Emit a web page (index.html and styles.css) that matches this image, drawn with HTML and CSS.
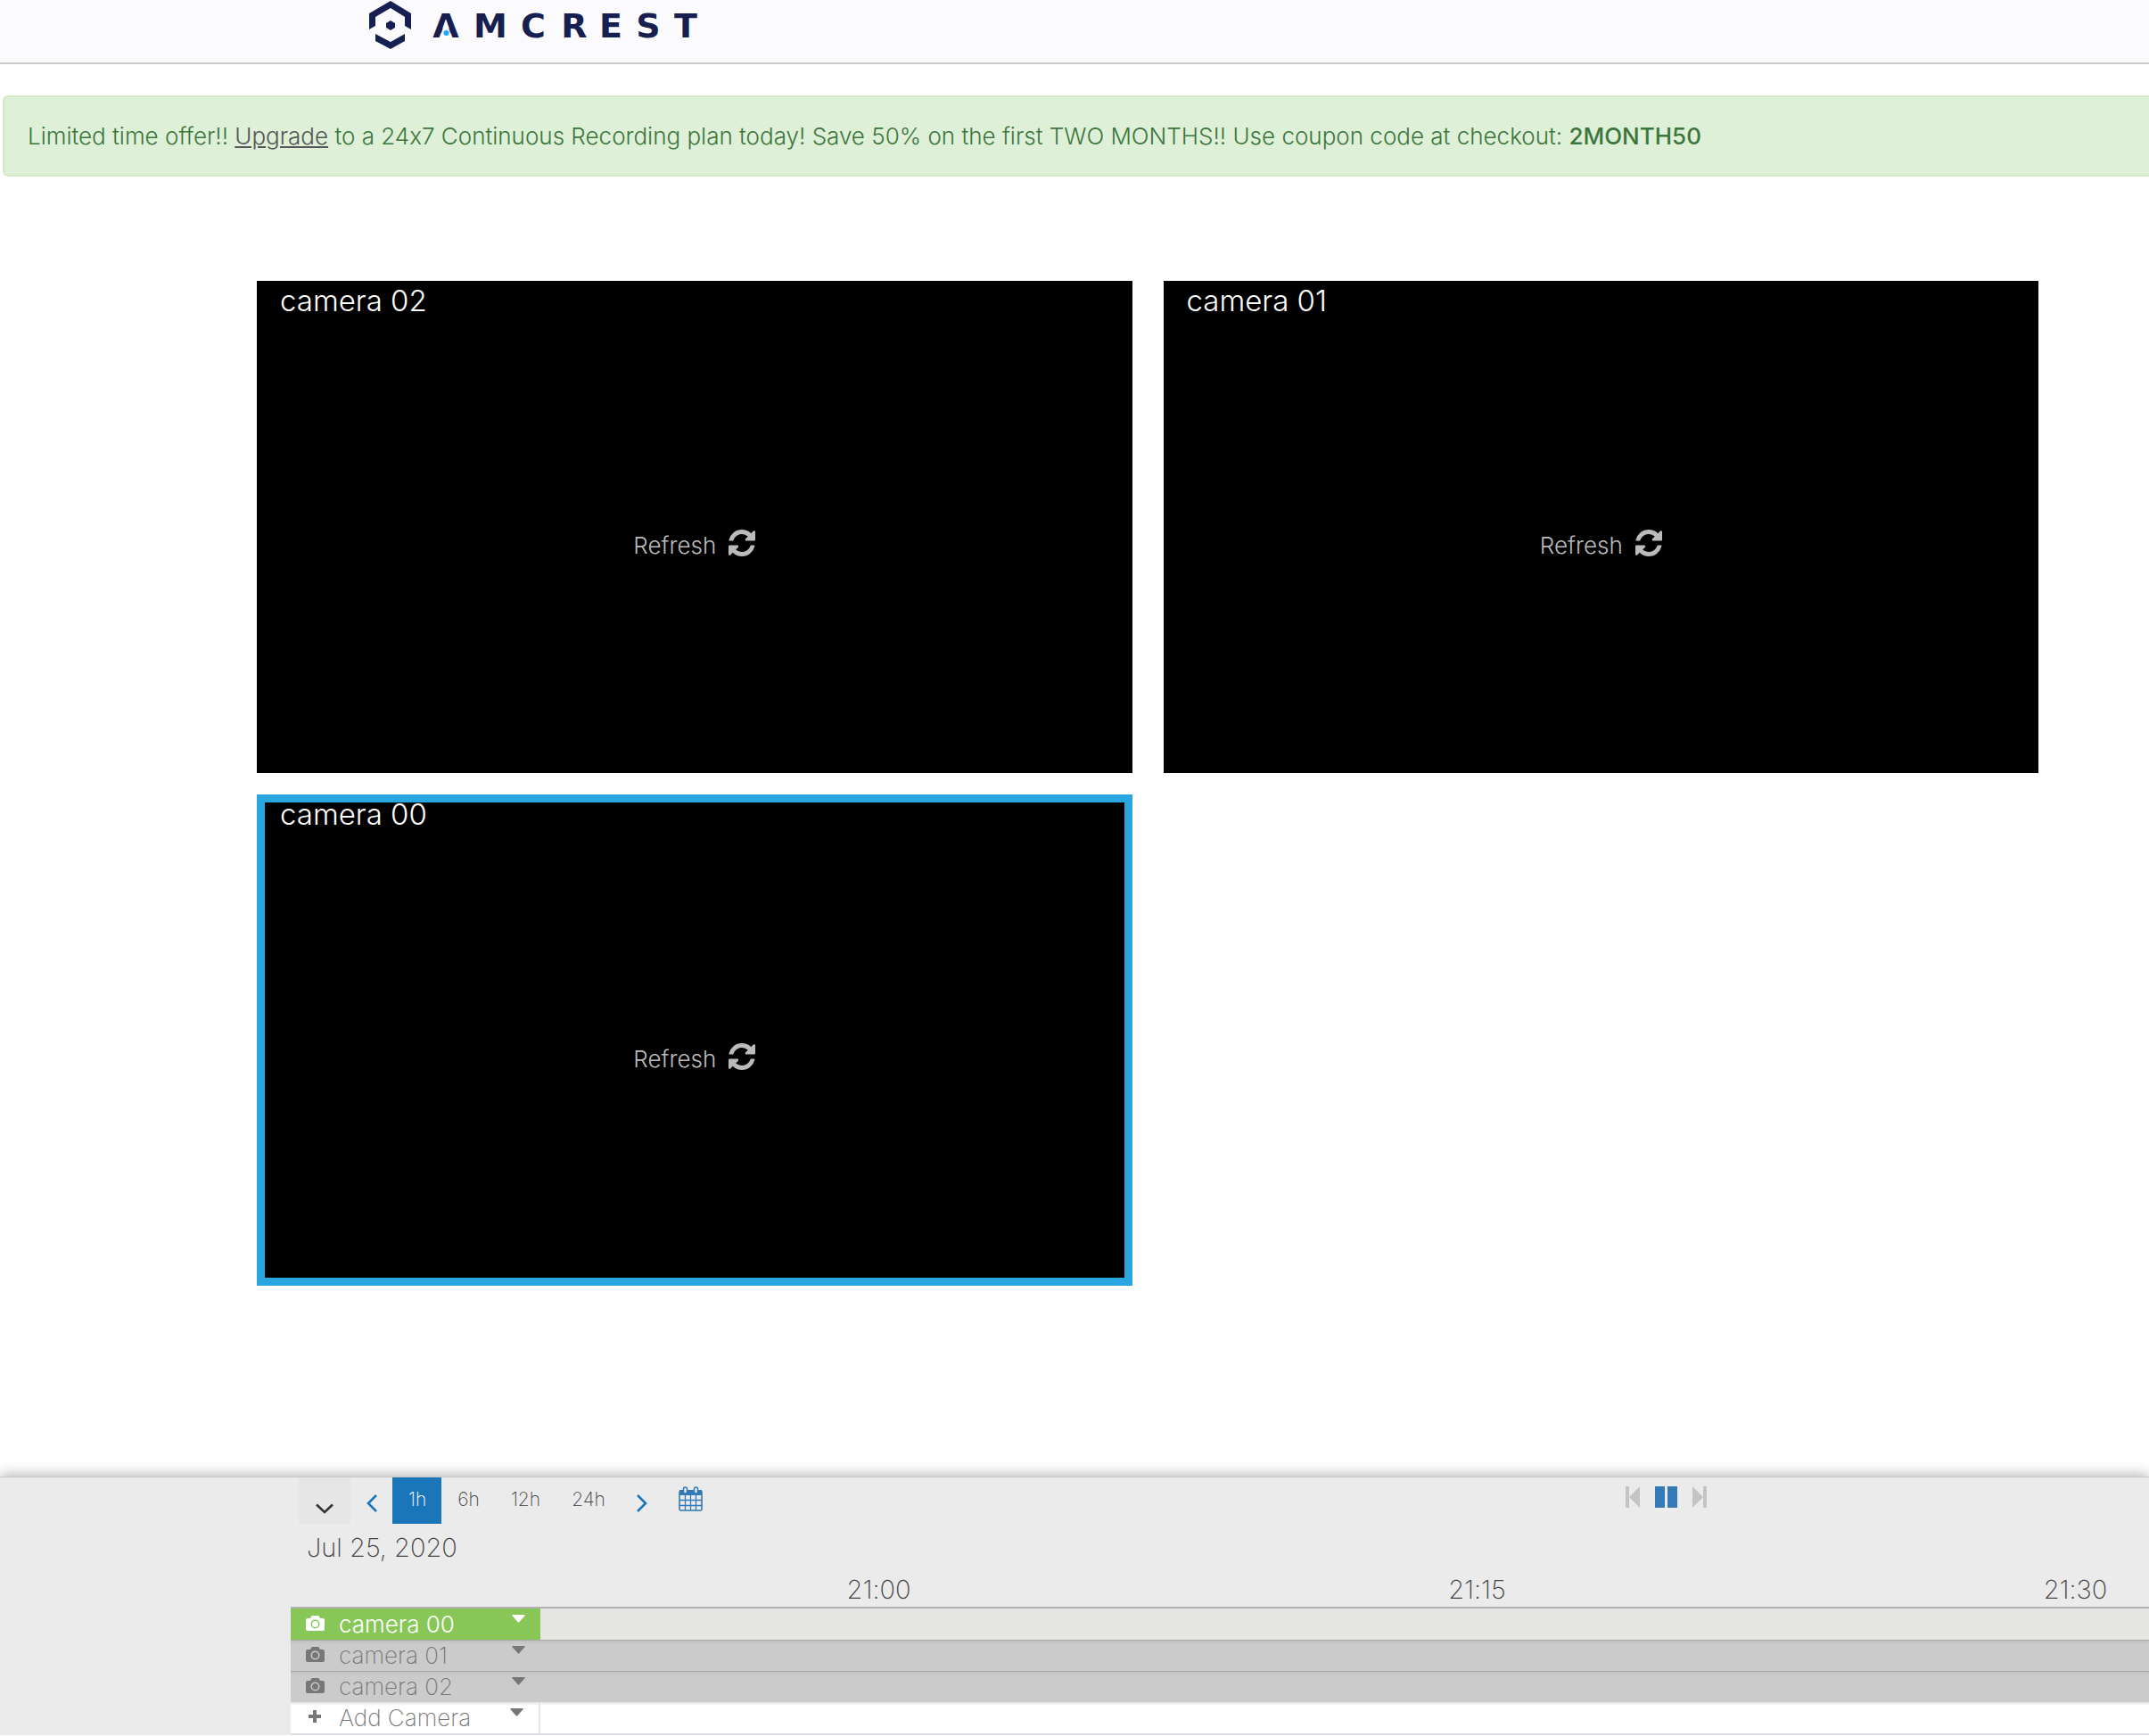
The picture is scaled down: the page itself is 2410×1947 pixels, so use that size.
FILE: index.html
```html
<!DOCTYPE html>
<html lang="en">
<head>
    <meta charset="UTF-8">
    <meta name="viewport" content="width=device-width, initial-scale=1.0">
    <title>Amcrest Cloud</title>
    <link rel="stylesheet" href="styles.css">
</head>
<body>

<!-- shared icons -->
<svg class="sprite" aria-hidden="true">
    <symbol id="refresh" viewBox="0 0 1536 1536">
        <path d="M1511 928q0 5-1 7-64 268-268 434.500T764 1536q-146 0-282.500-55T238 1324l-129 129q-19 19-45 19t-45-19-19-45V960q0-26 19-45t45-19h448q26 0 45 19t19 45-19 45l-137 137q71 66 161 102t187 36q134 0 250-65t186-179q11-17 53-117 8-23 30-23h192q13 0 22.500 9.500t9.500 22.500zm25-800v448q0 26-19 45t-45 19h-448q-26 0-45-19t-19-45 19-45l138-138Q969 256 768 256q-134 0-250 65T332 500q-11 17-53 117-8 23-30 23H50q-13 0-22.500-9.500T18 608v-7q65-268 270-434.500T768 0q146 0 284 55.500T1297 212l130-129q19-19 45-19t45 19 19 45z"/>
    </symbol>
    <symbol id="camera" viewBox="0 0 21 17">
        <path fill-rule="evenodd" d="M2 3h3l1-2q.4-1 1.500-1h6q1.100 0 1.500 1l1 2h3q2 0 2 2v10q0 2-2 2H2q-2 0-2-2V5q0-2 2-2zm8.500 1.500a5 5 0 1 0 0 10 5 5 0 0 0 0-10zm0 1.500a3.500 3.500 0 1 1 0 7 3.500 3.500 0 0 1 0-7z"/>
    </symbol>
    <symbol id="caret" viewBox="0 0 15 9">
        <path d="M1 0h13q1.500 0 .5 1.200L8.200 8.300q-.7.700-1.400 0L.5 1.200Q-.5 0 1 0z"/>
    </symbol>
</svg>

<header class="header">
    <a href="#" class="logo" aria-label="Amcrest">
        <svg width="370" height="58" viewBox="0 0 370 58">
            <g fill="#171f51">
                <path d="M24 1 47 15V33L40 29V19L24 9 7 19V29L0 33V15z"/>
                <path d="M7 38 24 47 40 38V46L24 55 7 46z"/>
                <path d="M24 23 29 26V31L24 34 19 31V26z"/>
            </g>
            <text class="wordmark" y="42" x="86 136 184 230 271 313 355">AMCREST</text>
            <path fill="#fbfbfe" d="M86 22 93 42.500H79z"/>
            <circle cx="86.500" cy="37" r="3" fill="#18a8ff"/>
        </svg>
    </a>
</header>

<div class="alert">
    Limited time offer!! <a href="#">Upgrade</a> to a 24x7 Continuous Recording plan today! Save 50% on the first TWO MONTHS!! Use coupon code at checkout: <b>2MONTH50</b>
</div>

<main class="cameras">
    <section class="camera">
        <h2>camera 02</h2>
        <button class="refresh">Refresh <svg><use href="#refresh"/></svg></button>
    </section>
    <section class="camera">
        <h2>camera 01</h2>
        <button class="refresh">Refresh <svg><use href="#refresh"/></svg></button>
    </section>
    <section class="camera selected">
        <h2>camera 00</h2>
        <button class="refresh">Refresh <svg><use href="#refresh"/></svg></button>
    </section>
</main>

<footer class="timeline">
    <div class="toolbar">
        <button class="toggle" aria-label="Collapse timeline">
            <svg width="20" height="12" viewBox="0 0 20 12"><path d="M1 1.500l9 8.500 9-8.500" fill="none" stroke="#333" stroke-width="2.600"/></svg>
        </button>
        <button class="arrow" aria-label="Earlier">
            <svg width="12" height="20" viewBox="0 0 12 20"><path d="M11 1L2 10l9 9" fill="none" stroke="#1b75b9" stroke-width="2.600"/></svg>
        </button>
        <button class="period active">1h</button>
        <button class="period">6h</button>
        <button class="period">12h</button>
        <button class="period">24h</button>
        <button class="arrow" aria-label="Later">
            <svg width="12" height="20" viewBox="0 0 12 20"><path d="M1 1l9 9-9 9" fill="none" stroke="#1b75b9" stroke-width="2.600"/></svg>
        </button>
        <button class="calendar" aria-label="Pick a date">
            <svg width="27" height="28" viewBox="0 0 27 28">
                <rect x="1" y="5" width="25" height="22" rx="1.500" fill="#ebebeb" stroke="#337ab7" stroke-width="1.600"/>
                <path d="M1 4h25v6H1z" fill="#337ab7"/>
                <path d="M1 15.500h25M1 21.500h25M7.500 10v17M13.500 10v17M19.500 10v17" stroke="#337ab7" stroke-width="1.300"/>
                <rect x="5.500" y="1" width="4" height="7" rx="2" fill="#ebebeb" stroke="#337ab7" stroke-width="1.500"/>
                <rect x="17.500" y="1" width="4" height="7" rx="2" fill="#ebebeb" stroke="#337ab7" stroke-width="1.500"/>
            </svg>
        </button>
        <div class="playback">
            <button aria-label="Previous"><svg width="16" height="24" viewBox="0 0 16 24"><path d="M0 0h4v12L16 0v24L4 12v12H0z" fill="#c4c4c4"/></svg></button>
            <button aria-label="Pause"><svg width="25" height="24" viewBox="0 0 25 24"><path d="M0 0h11v24H0zM14 0h11v24H14z" fill="#337ab7"/></svg></button>
            <button aria-label="Next"><svg width="16" height="24" viewBox="0 0 16 24"><path d="M16 0h-4v12L0 0v24l12-12v12h4z" fill="#c4c4c4"/></svg></button>
        </div>
    </div>

    <div class="date">Jul 25, 2020</div>

    <div class="ruler">
        <span>21:00</span>
        <span>21:15</span>
        <span>21:30</span>
    </div>

    <div class="tracks">
        <div class="track current">
            <button class="name"><svg class="icon"><use href="#camera"/></svg>camera 00<svg class="caret"><use href="#caret"/></svg></button>
        </div>
        <div class="track">
            <button class="name"><svg class="icon"><use href="#camera"/></svg>camera 01<svg class="caret"><use href="#caret"/></svg></button>
        </div>
        <div class="track">
            <button class="name"><svg class="icon"><use href="#camera"/></svg>camera 02<svg class="caret"><use href="#caret"/></svg></button>
        </div>
        <div class="track add">
            <button class="name"><svg class="icon" viewBox="0 0 21 17"><path d="M8 1h4v5h5v4h-5v5H8v-5H3V6h5z"/></svg>Add Camera<svg class="caret"><use href="#caret"/></svg></button>
        </div>
    </div>
</footer>

</body>
</html>
```
FILE: styles.css
```css
* {
    box-sizing: border-box;
}
body {
    font-family: Inter, "Liberation Sans", sans-serif;
    font-weight: 200;
    font-size: 26px;
    font-variant-ligatures: no-contextual;
    display: flex;
    flex-direction: column;
    min-height: 100vh;
    margin: 0;
    background-color: #fff;
    overflow-x: hidden;
}
button {
    padding: 0;
    border: none;
    background: none;
    color: inherit;
    font: inherit;
    cursor: pointer;
}
svg {
    display: block;
    flex: none;
    fill: currentColor;
}
.sprite {
    display: none;
}
.header {
    height: 72px;
    padding-left: 414px;
    background-color: #fbfbfe;
    border-bottom: 2px solid #ccc;
}
.logo {
    display: inline-block;
}
.wordmark {
    font-family: "DejaVu Sans", sans-serif;
    font-size: 38px;
    font-weight: 700;
    text-anchor: middle;
    fill: #171f51;
}
.alert {
    margin: 35px 0 0 3px;
    padding: 28px 26px;
    font-weight: 300;
    line-height: 31px;
    color: #3c763d;
    background-color: #dff0d8;
    border: 2px solid #d6e9c6;
    border-right: none;
    border-radius: 6px 0 0 6px;
}
.alert a {
    color: #555;
}
.alert b {
    font-weight: 500;
}
.cameras {
    display: grid;
    grid-template-columns: 1fr 1fr;
    gap: 24px 35px;
    padding: 117px 124px 40px 288px;
}
.camera {
    position: relative;
    display: flex;
    align-items: center;
    justify-content: center;
    aspect-ratio: 982 / 552;
    background-color: #000;
}
.camera.selected {
    box-shadow: inset 0 0 0 9px #29a6e0;
}
.camera h2 {
    position: absolute;
    top: 2px;
    left: 26px;
    margin: 0;
    font-size: 33px;
    font-weight: 300;
    line-height: 40px;
    color: #fff;
}
.refresh {
    display: flex;
    align-items: center;
    gap: 14px;
    padding-top: 42px;
    font-weight: 300;
    color: #bbb;
}
.refresh svg {
    width: 30px;
    height: 30px;
    margin-bottom: 6px;
}
.timeline {
    margin-top: auto;
    background-color: #ebebeb;
    border-top: 1px solid #c8c8c8;
    border-bottom: 1px solid #fff;
    box-shadow: 0 -2px 14px rgba(0,0,0,0.3);
    color: #444;
}
.toolbar {
    display: flex;
    height: 52px;
    padding-left: 335px;
    font-size: 21px;
}
.toggle {
    width: 58px;
    padding: 18px 19px 0;
    background-color: #e6e6e6;
}
.arrow {
    width: 47px;
    padding: 5px 18px 0;
}
.period {
    padding: 0 17px 4px 18px;
}
.period.active {
    background-color: #1b75b9;
    color: #fff;
}
.calendar {
    padding: 0 18px 4px;
}
.playback {
    display: flex;
    align-items: center;
    gap: 17px;
    margin-left: 49%;
    padding-bottom: 8px;
}
.date {
    padding: 7px 0 0 344px;
    font-size: 29px;
    line-height: 40px;
}
.ruler {
    display: flex;
    padding: 8px 0 0 650px;
    overflow: hidden;
    font-size: 29px;
    line-height: 38px;
}
.ruler span {
    flex: none;
    width: 671px;
    text-align: center;
}
.tracks {
    margin-left: 326px;
    border-top: 2px solid #b2b2b2;
    border-bottom: 2px solid #dcdce4;
}
.track {
    height: 35px;
    background: linear-gradient(#a9a9a9 1px, #c0c0c0 1px, #cbcbcb 5px);
    color: #777;
}
.track .name {
    display: flex;
    align-items: center;
    width: 280px;
    height: 35px;
    padding: 0 17px;
}
.track.current {
    background: #e5e5e3;
    color: #fff;
}
.track.current .name {
    background-color: #88c757;
    font-weight: 300;
}
.track.add {
    background: linear-gradient(#e4e4e4, #fff 4px);
}
.track.add .name {
    border-right: 2px solid #e6e6e6;
}
.icon {
    width: 21px;
    height: 17px;
    margin: 0 16px 2px 0;
}
.caret {
    width: 15px;
    height: 9px;
    margin: 0 0 12px auto;
}
```
